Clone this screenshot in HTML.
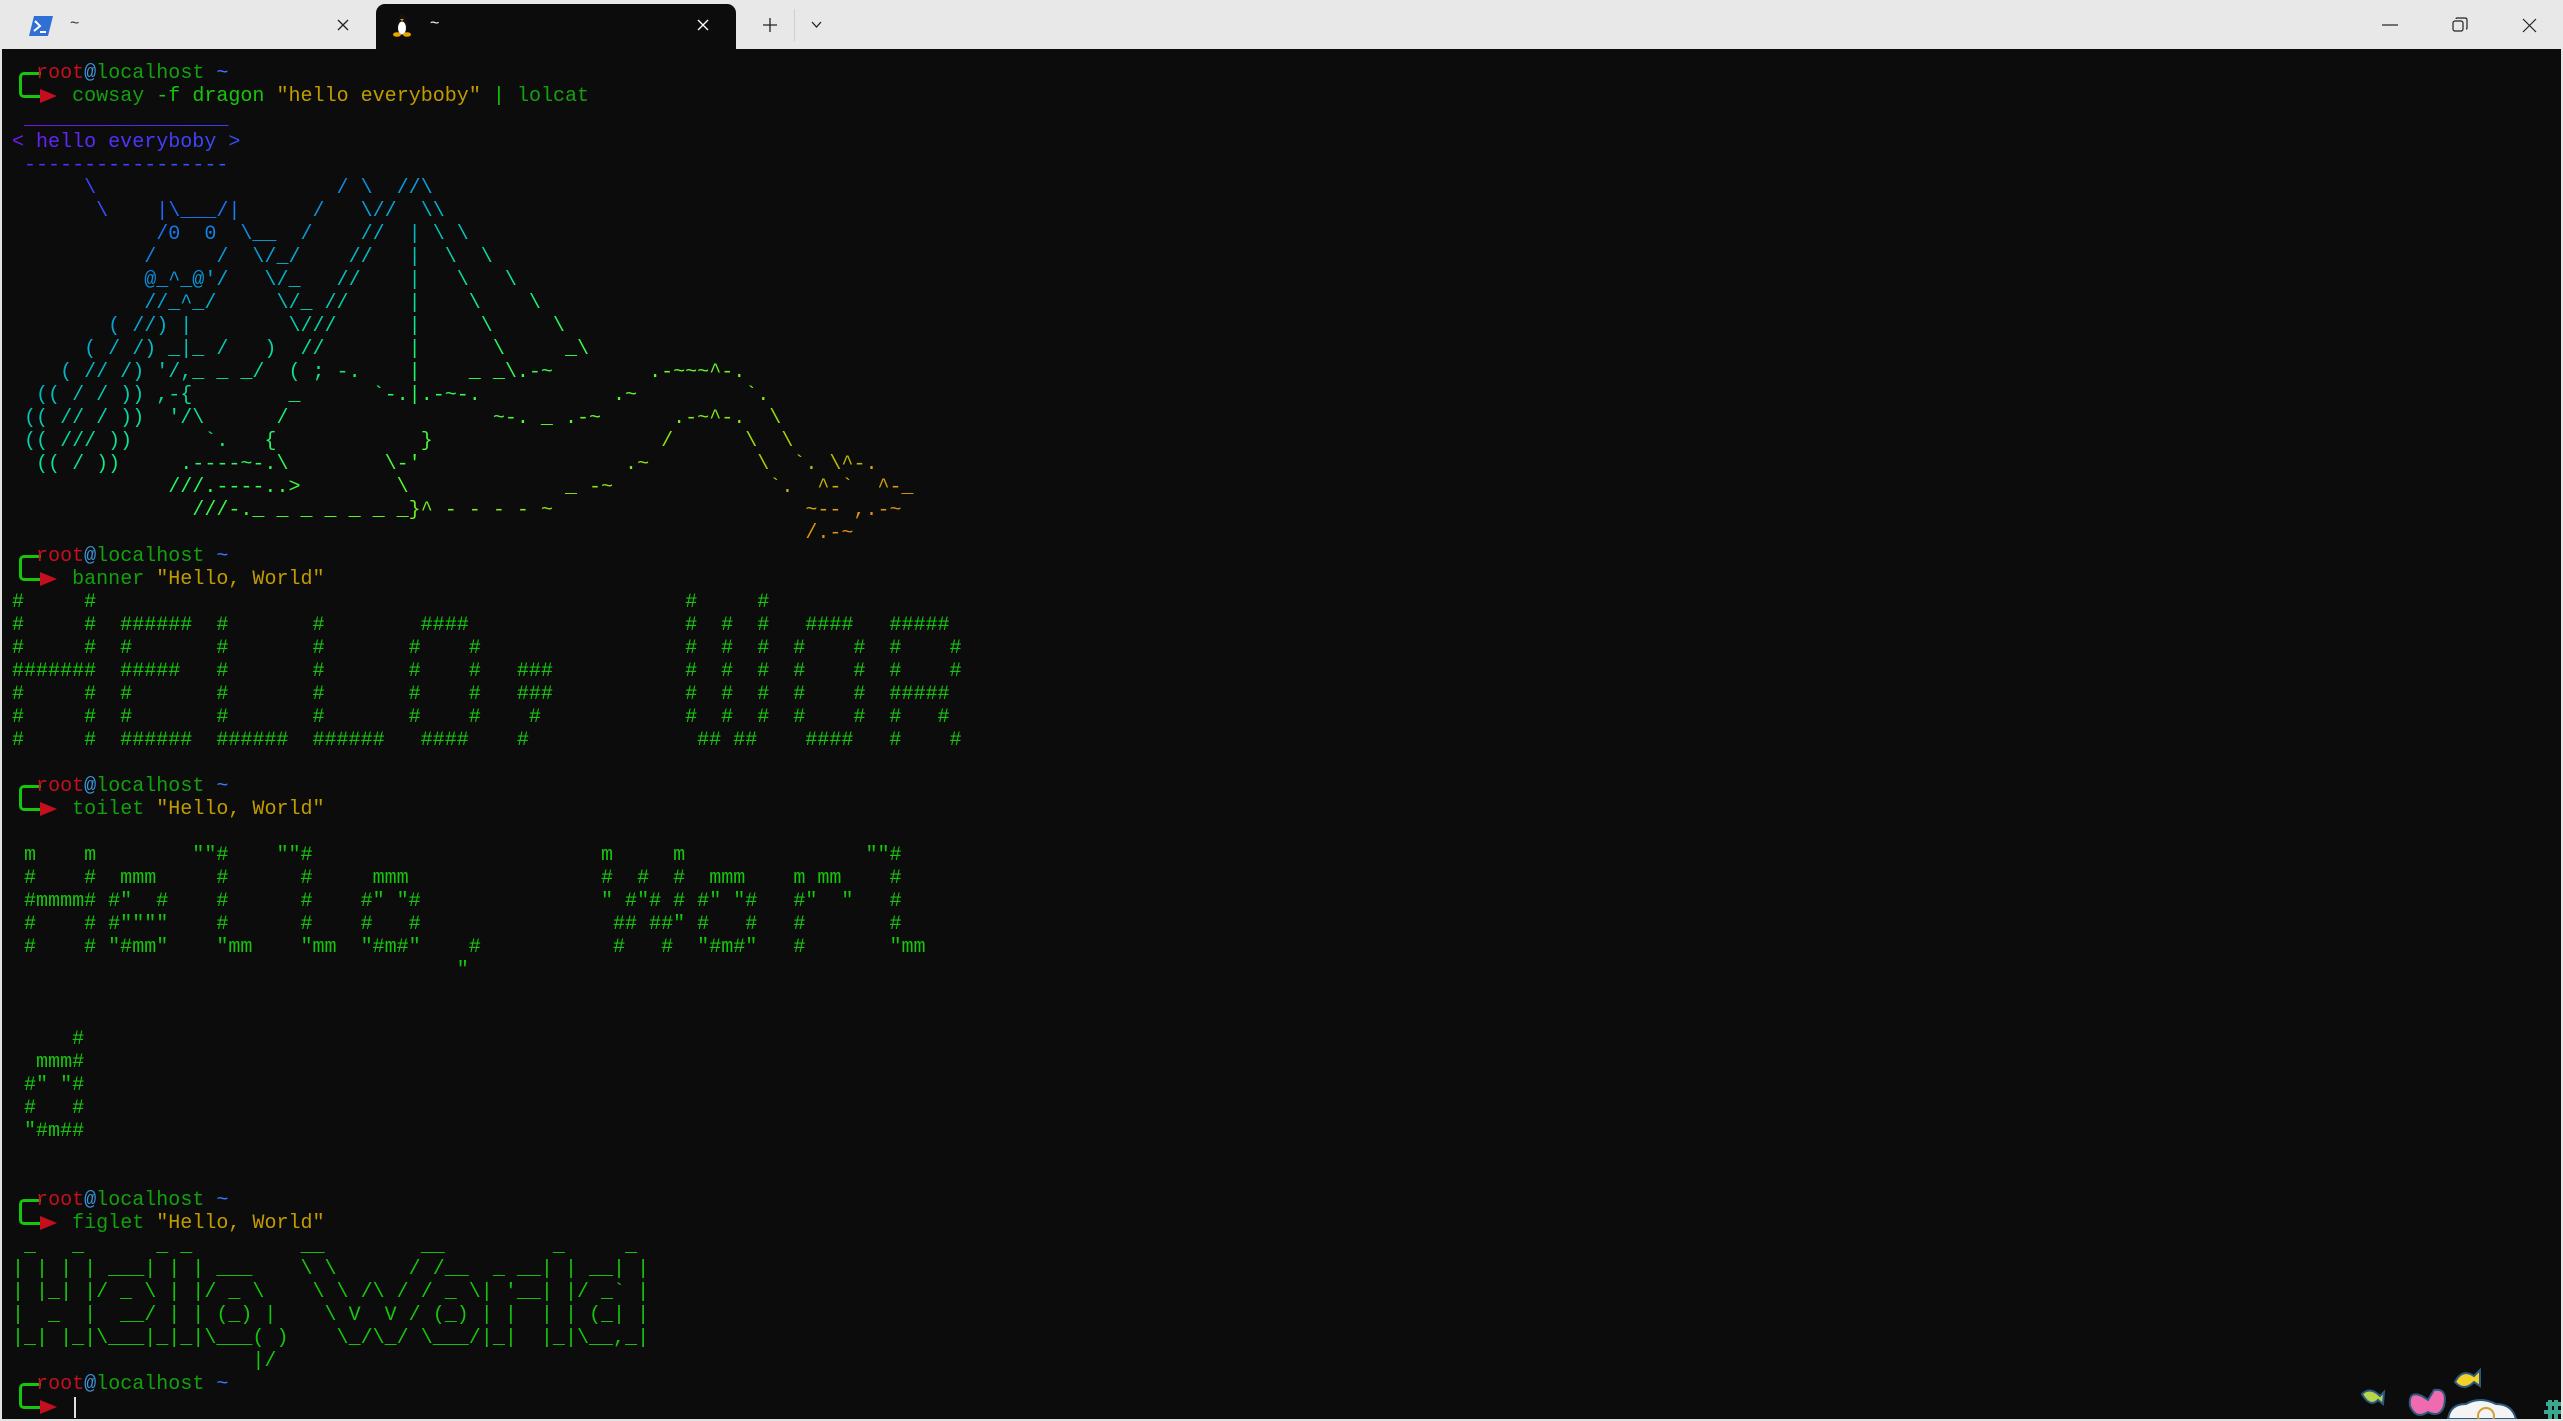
<!DOCTYPE html>
<html><head><meta charset="utf-8"><style>
html,body{margin:0;padding:0;}
body{width:2563px;height:1421px;background:#0c0c0c;position:relative;overflow:hidden;font-family:"Liberation Sans",sans-serif;}
#bar{position:absolute;left:0;top:0;width:2563px;height:49px;background:#e8e8e8;}
#tab{position:absolute;left:376px;top:4px;width:360px;height:46px;background:#0c0c0c;border-radius:9px 9px 0 0;}
.tl{position:absolute;top:15px;font-size:16px;}
#frameL{position:absolute;left:0;top:49px;width:2px;height:1372px;background:#e3e3e3;}
#frameR{position:absolute;right:0;top:49px;width:2px;height:1372px;background:#e3e3e3;}
#frameB{position:absolute;left:0;bottom:0;width:2563px;height:2px;background:#e3e3e3;}
#t{position:absolute;left:12px;top:61.5px;font-family:"Liberation Mono","DejaVu Sans Mono",monospace;font-size:20.04px;color:#16c60c;}
.r{height:23.01px;line-height:23.01px;white-space:pre;position:relative;}
.r i{position:absolute;top:0;font-style:normal;}
.c{display:inline-block;width:8ch;white-space:pre;}
.p{position:relative;}
.br{position:absolute;left:7px;top:10px;width:22px;height:26px;box-sizing:border-box;border:3px solid #16c60c;border-right:none;border-radius:5px 0 0 5px;}
.ar{position:absolute;left:28px;top:27px;width:0;height:0;border-left:17px solid #c50f1f;border-top:7px solid transparent;border-bottom:7px solid transparent;}
.ro{color:#c50f1f}.at{color:#3a96dd}.lh{color:#13a10e}.ti{color:#3b78ff}
.g{color:#13a10e}.gb{color:#16c60c}.y{color:#c19c00}
#lol{width:980px;background:linear-gradient(156.4deg,#8510ec 0px,#532ffd 70px,#2068f8 158px,#04a7d5 245px,#06dd9d 333px,#26fb5e 420px,#5dfb28 508px,#9bdd07 596px,#d3a904 683px,#fa6026 785px,#fa6026 900px);-webkit-background-clip:text;background-clip:text;color:transparent;-webkit-text-fill-color:transparent;}
#lol .r{position:static;}
.cur{position:absolute;left:62px;top:1px;width:2px;height:21px;background:#e0e0e0;}
</style></head><body>
<div id="bar">
  <svg style="position:absolute;left:29px;top:16px" width="24" height="20" viewBox="0 0 24 20"><path d="M5 0 H24 L19 20 H0 Z" fill="#2f6fd6"/><path d="M6 5 L11 10 L5 15" stroke="#fff" stroke-width="2" fill="none"/><path d="M11 16 H17" stroke="#fff" stroke-width="2"/></svg>
  <div class="tl" style="left:70px;color:#333">~</div>
  <svg style="position:absolute;left:337px;top:19px" width="12" height="12"><path d="M1 1 L11 11 M11 1 L1 11" stroke="#222" stroke-width="1.3"/></svg>
  <div id="tab"></div>
  <svg style="position:absolute;left:391px;top:13px" width="22" height="24" viewBox="0 0 22 24"><ellipse cx="11" cy="13" rx="6" ry="9" fill="#111"/><ellipse cx="11" cy="15" rx="4" ry="6.5" fill="#fff"/><circle cx="11" cy="5" r="3.5" fill="#111"/><path d="M9 6 L11 8 L13 6Z" fill="#e8a500"/><ellipse cx="6" cy="21.5" rx="4" ry="2.3" fill="#e8a500"/><ellipse cx="16" cy="21.5" rx="4" ry="2.3" fill="#e8a500"/></svg>
  <div class="tl" style="left:430px;color:#fff">~</div>
  <svg style="position:absolute;left:697px;top:19px" width="12" height="12"><path d="M1 1 L11 11 M11 1 L1 11" stroke="#fff" stroke-width="1.3"/></svg>
  <svg style="position:absolute;left:763px;top:18px" width="14" height="14"><path d="M7 0 V14 M0 7 H14" stroke="#222" stroke-width="1.3"/></svg>
  <div style="position:absolute;left:794px;top:9px;width:1px;height:32px;background:#cfcfcf"></div>
  <svg style="position:absolute;left:811px;top:21px" width="11" height="7"><path d="M1 1 L5.5 6 L10 1" stroke="#222" stroke-width="1.3" fill="none"/></svg>
  <svg style="position:absolute;left:2382px;top:24px" width="16" height="2"><path d="M0 1 H16" stroke="#222" stroke-width="1.2"/></svg>
  <svg style="position:absolute;left:2452px;top:17px" width="16" height="16"><rect x="1" y="4" width="10" height="10" rx="2" stroke="#222" stroke-width="1.2" fill="none"/><path d="M4 2 Q4 1 5 1 H13 Q15 1 15 3 V11 Q15 12 14 12" stroke="#222" stroke-width="1.2" fill="none"/></svg>
  <svg style="position:absolute;left:2522px;top:18px" width="15" height="15"><path d="M1 1 L14 14 M14 1 L1 14" stroke="#222" stroke-width="1.2"/></svg>
</div>
<div id="frameL"></div><div id="frameR"></div><div id="frameB"></div>

<div id="t">
<div class="p"><div class="br"></div><div class="ar"></div>
<div class="r">  <span class="ro">root</span><span class="at">@</span><span class="lh">localhost</span> <span class="ti">~</span></div>
<div class="r">     <span class="g">cowsay</span> <span class="gb">-f dragon</span> <span class="y">"hello everyboby"</span> <span class="gb">|</span> <span class="g">lolcat</span></div>
</div>
<div id="lol">
<div class="r"> _________________</div>
<div class="r">&lt; hello everyboby &gt;</div>
<div class="r"> -----------------</div>
<div class="r">      \                    / \  //\</div>
<div class="r">       \    |\___/|      /   \//  \\</div>
<div class="r">            /0  0  \__  /    //  | \ \    </div>
<div class="r">           /     /  \/_/    //   |  \  \  </div>
<div class="r">           @_^_@'/   \/_   //    |   \   \ </div>
<div class="r">           //_^_/     \/_ //     |    \    \</div>
<div class="r">        ( //) |        \///      |     \     \</div>
<div class="r">      ( / /) _|_ /   )  //       |      \     _\</div>
<div class="r">    ( // /) '/,_ _ _/  ( ; -.    |    _ _\.-~        .-~~~^-.</div>
<div class="r">  (( / / )) ,-{        _      `-.|.-~-.           .~         `.</div>
<div class="r"> (( // / ))  '/\      /                 ~-. _ .-~      .-~^-.  \</div>
<div class="r"> (( /// ))      `.   {            }                   /      \  \</div>
<div class="r">  (( / ))     .----~-.\        \-'                 .~         \  `. \^-.</div>
<div class="r">             ///.----..&gt;        \             _ -~             `.  ^-`  ^-_</div>
<div class="r">               ///-._ _ _ _ _ _ _}^ - - - - ~                     ~-- ,.-~</div>
<div class="r">                                                                  /.-~</div>
</div>
<div class="p"><div class="br"></div><div class="ar"></div>
<div class="r">  <span class="ro">root</span><span class="at">@</span><span class="lh">localhost</span> <span class="ti">~</span></div>
<div class="r">     <span class="g">banner</span> <span class="y">"Hello, World"</span></div>
</div>
<div class="r"><span class="c">#     #</span><span class="c"></span><span class="c"></span><span class="c"></span><span class="c"></span><span class="c"></span><span class="c"></span><span class="c">#     #</span></div>
<div class="r"><span class="c">#     #</span><span class="c"> ######</span><span class="c"> #</span><span class="c"> #</span><span class="c">  ####</span><span class="c"></span><span class="c"></span><span class="c">#  #  #</span><span class="c">  ####</span><span class="c"> #####</span></div>
<div class="r"><span class="c">#     #</span><span class="c"> #</span><span class="c"> #</span><span class="c"> #</span><span class="c"> #    #</span><span class="c"></span><span class="c"></span><span class="c">#  #  #</span><span class="c"> #    #</span><span class="c"> #    #</span></div>
<div class="r"><span class="c">#######</span><span class="c"> #####</span><span class="c"> #</span><span class="c"> #</span><span class="c"> #    #</span><span class="c">  ###</span><span class="c"></span><span class="c">#  #  #</span><span class="c"> #    #</span><span class="c"> #    #</span></div>
<div class="r"><span class="c">#     #</span><span class="c"> #</span><span class="c"> #</span><span class="c"> #</span><span class="c"> #    #</span><span class="c">  ###</span><span class="c"></span><span class="c">#  #  #</span><span class="c"> #    #</span><span class="c"> #####</span></div>
<div class="r"><span class="c">#     #</span><span class="c"> #</span><span class="c"> #</span><span class="c"> #</span><span class="c"> #    #</span><span class="c">   #</span><span class="c"></span><span class="c">#  #  #</span><span class="c"> #    #</span><span class="c"> #   #</span></div>
<div class="r"><span class="c">#     #</span><span class="c"> ######</span><span class="c"> ######</span><span class="c"> ######</span><span class="c">  ####</span><span class="c">  #</span><span class="c"></span><span class="c"> ## ##</span><span class="c">  ####</span><span class="c"> #    #</span></div>
<div class="r"></div>
<div class="p"><div class="br"></div><div class="ar"></div>
<div class="r">  <span class="ro">root</span><span class="at">@</span><span class="lh">localhost</span> <span class="ti">~</span></div>
<div class="r">     <span class="g">toilet</span> <span class="y">"Hello, World"</span></div>
</div>
<div class="r"></div>
<div class="r"><i style="left:1ch">m</i><i style="left:6ch">m</i><i style="left:15ch">""#</i><i style="left:22ch">""#</i><i style="left:49ch">m</i><i style="left:55ch">m</i><i style="left:71ch">""#</i></div>
<div class="r"><i style="left:1ch">#</i><i style="left:6ch">#</i><i style="left:9ch">mmm</i><i style="left:17ch">#</i><i style="left:24ch">#</i><i style="left:30ch">mmm</i><i style="left:49ch">#</i><i style="left:52ch">#</i><i style="left:55ch">#</i><i style="left:58ch">mmm</i><i style="left:65ch">m mm</i><i style="left:73ch">#</i></div>
<div class="r"><i style="left:1ch">#mmmm#</i><i style="left:8ch">#"</i><i style="left:12ch">#</i><i style="left:17ch">#</i><i style="left:24ch">#</i><i style="left:29ch">#"</i><i style="left:32ch">"#</i><i style="left:49ch">"</i><i style="left:51ch">#"#</i><i style="left:55ch">#</i><i style="left:57ch">#"</i><i style="left:60ch">"#</i><i style="left:65ch">#"</i><i style="left:69ch">"</i><i style="left:73ch">#</i></div>
<div class="r"><i style="left:1ch">#</i><i style="left:6ch">#</i><i style="left:8ch">#""""</i><i style="left:17ch">#</i><i style="left:24ch">#</i><i style="left:29ch">#</i><i style="left:33ch">#</i><i style="left:50ch">##</i><i style="left:53ch">##"</i><i style="left:57ch">#</i><i style="left:61ch">#</i><i style="left:65ch">#</i><i style="left:73ch">#</i></div>
<div class="r"><i style="left:1ch">#</i><i style="left:6ch">#</i><i style="left:8ch">"#mm"</i><i style="left:17ch">"mm</i><i style="left:24ch">"mm</i><i style="left:29ch">"#m#"</i><i style="left:38ch">#</i><i style="left:50ch">#</i><i style="left:54ch">#</i><i style="left:57ch">"#m#"</i><i style="left:65ch">#</i><i style="left:73ch">"mm</i></div>
<div class="r"><i style="left:37ch">"</i></div>
<div class="r"></div>
<div class="r"></div>
<div class="r">     #</div>
<div class="r">  mmm#</div>
<div class="r"> #" "#</div>
<div class="r"> #   #</div>
<div class="r"> "#m##</div>
<div class="r"></div>
<div class="r"></div>
<div class="p"><div class="br"></div><div class="ar"></div>
<div class="r">  <span class="ro">root</span><span class="at">@</span><span class="lh">localhost</span> <span class="ti">~</span></div>
<div class="r">     <span class="g">figlet</span> <span class="y">"Hello, World"</span></div>
</div>
<div class="r"> _   _      _ _         __        __         _     _ </div>
<div class="r">| | | | ___| | | ___    \ \      / /__  _ __| | __| |</div>
<div class="r">| |_| |/ _ \ | |/ _ \    \ \ /\ / / _ \| '__| |/ _` |</div>
<div class="r">|  _  |  __/ | | (_) |    \ V  V / (_) | |  | | (_| |</div>
<div class="r">|_| |_|\___|_|_|\___( )    \_/\_/ \___/|_|  |_|\__,_|</div>
<div class="r">                    |/                               </div>
<div class="p"><div class="br"></div><div class="ar"></div>
<div class="r">  <span class="ro">root</span><span class="at">@</span><span class="lh">localhost</span> <span class="ti">~</span></div>
<div class="r"><div class="cur"></div></div>
</div>
</div>

<svg style="position:absolute;left:2350px;top:1360px" width="211" height="59" viewBox="0 0 211 59">
  <path d="M12 34 Q20 26 30 36 L34 32 L33 44 L28 40 Q20 48 12 34Z" fill="#b8d44a" stroke="#2a5a80" stroke-width="2"/>
  <path d="M60 46 Q58 30 72 36 L78 40 L84 30 Q98 28 94 46 Q90 58 78 52 Q66 60 60 46Z" fill="#f06ab0" stroke="#2a5a80" stroke-width="2"/>
  <path d="M105 22 Q112 8 124 16 L130 10 L130 26 L124 22 Q114 32 105 22Z" fill="#f2d22a" stroke="#2a5a80" stroke-width="2"/>
  <path d="M98 59 Q100 44 116 44 Q130 36 146 44 Q162 44 166 59Z" fill="#f4f4f4" stroke="#2a5a80" stroke-width="2"/>
  <circle cx="136" cy="56" r="8" fill="none" stroke="#d0a030" stroke-width="2"/>
  <path d="M196 44 H211 M200 40 V59 M206 40 V59 M194 52 H211" stroke="#3aa890" stroke-width="4"/>
</svg>
</body></html>
